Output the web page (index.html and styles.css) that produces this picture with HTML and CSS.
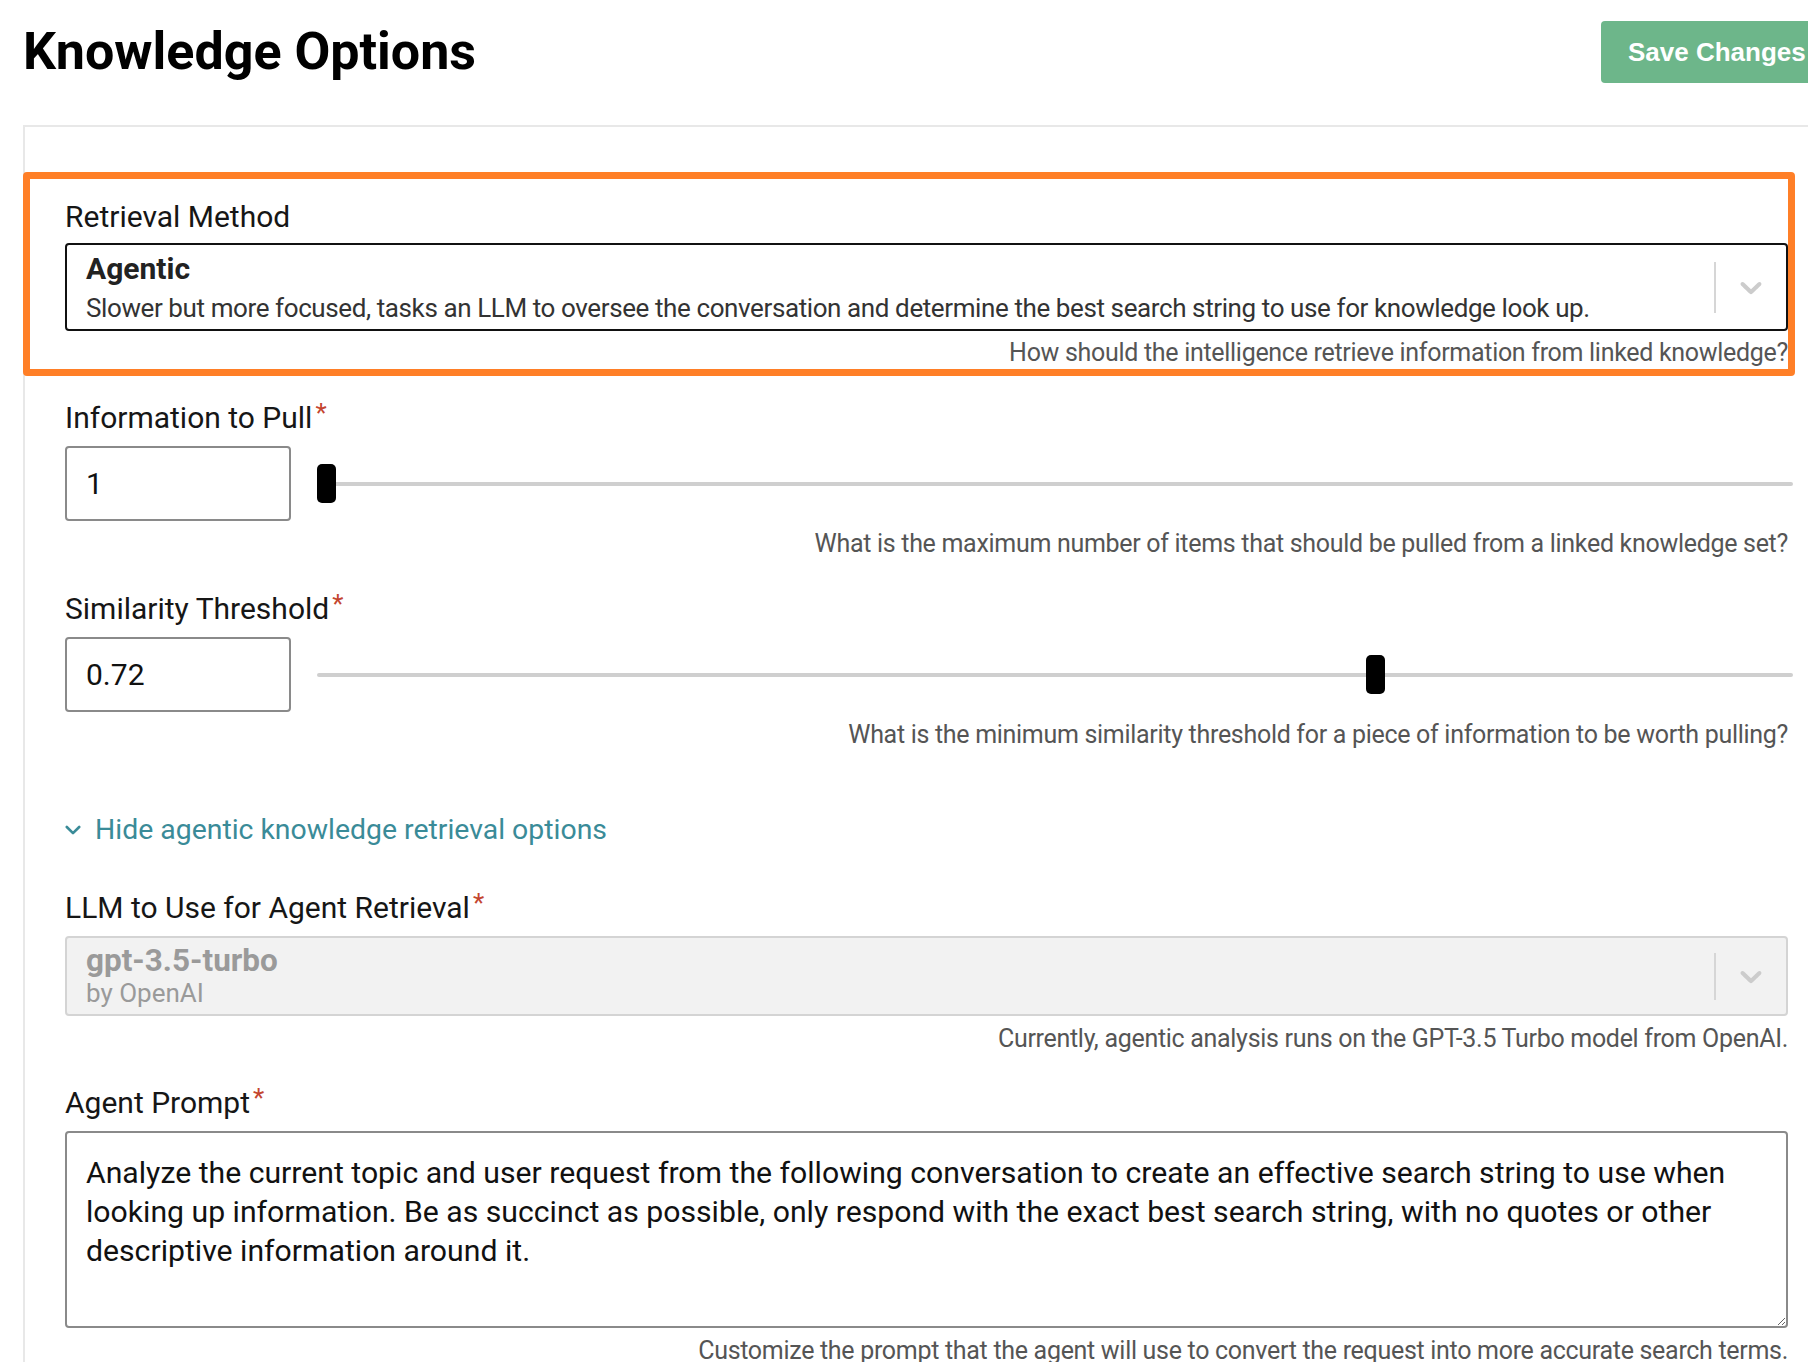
FILE: index.html
```html
<!DOCTYPE html>
<html lang="en">
<head>
<meta charset="utf-8">
<title>Knowledge Options</title>
<link rel="stylesheet" href="styles.css">
</head>
<body>
<div class="page">
  <header class="header">
    <h1 class="title">Knowledge Options</h1>
    <button class="save-btn" type="button">Save Changes</button>
  </header>

  <section class="card">
    <div class="fields">

      <div class="field highlight">
        <label class="label label-first">Retrieval Method</label>
        <div class="select">
          <div class="select-value">
            <div class="select-title">Agentic</div>
            <div class="select-desc">Slower but more focused, tasks an LLM to oversee the conversation and determine the best search string to use for knowledge look up.</div>
          </div>
          <div class="indicators">
            <span class="separator"></span>
            <svg class="chev" viewBox="0 0 20 20" aria-hidden="true"><path d="M4.516 7.548c0.436-0.446 1.043-0.481 1.576 0l3.908 3.747 3.908-3.747c0.533-0.481 1.141-0.446 1.574 0 0.436 0.445 0.408 1.197 0 1.615-0.406 0.418-4.695 4.502-4.695 4.502-0.217 0.223-0.502 0.335-0.787 0.335s-0.57-0.112-0.789-0.335c0 0-4.287-4.084-4.695-4.502s-0.436-1.17 0-1.615z"/></svg>
          </div>
        </div>
        <p class="help help-tight">How should the intelligence retrieve information from linked knowledge?</p>
      </div>

      <div class="field field-info">
        <label class="label">Information to Pull<span class="req">*</span></label>
        <div class="slider-row">
          <input class="num" type="text" value="1">
          <input class="range" type="range" min="1" max="20" step="1" value="1">
        </div>
        <p class="help">What is the maximum number of items that should be pulled from a linked knowledge set?</p>
      </div>

      <div class="field field-sim">
        <label class="label">Similarity Threshold<span class="req">*</span></label>
        <div class="slider-row">
          <input class="num" type="text" value="0.72">
          <input class="range" type="range" min="0" max="1" step="0.01" value="0.72">
        </div>
        <p class="help">What is the minimum similarity threshold for a piece of information to be worth pulling?</p>
      </div>

      <div class="toggle">
        <svg class="toggle-chev" viewBox="0 0 16 16" aria-hidden="true"><path d="M1.8 5 8 11.2 14.2 5"/></svg>
        <span>Hide agentic knowledge retrieval options</span>
      </div>

      <div class="field field-llm">
        <label class="label">LLM to Use for Agent Retrieval<span class="req">*</span></label>
        <div class="select select-disabled">
          <div class="select-value">
            <div class="llm-title">gpt-3.5-turbo</div>
            <div class="llm-sub">by OpenAI</div>
          </div>
          <div class="indicators">
            <span class="separator separator-short"></span>
            <svg class="chev" viewBox="0 0 20 20" aria-hidden="true"><path d="M4.516 7.548c0.436-0.446 1.043-0.481 1.576 0l3.908 3.747 3.908-3.747c0.533-0.481 1.141-0.446 1.574 0 0.436 0.445 0.408 1.197 0 1.615-0.406 0.418-4.695 4.502-4.695 4.502-0.217 0.223-0.502 0.335-0.787 0.335s-0.57-0.112-0.789-0.335c0 0-4.287-4.084-4.695-4.502s-0.436-1.17 0-1.615z"/></svg>
          </div>
        </div>
        <p class="help">Currently, agentic analysis runs on the GPT-3.5 Turbo model from OpenAI.</p>
      </div>

      <div class="field field-prompt">
        <label class="label">Agent Prompt<span class="req">*</span></label>
        <textarea class="prompt">Analyze the current topic and user request from the following conversation to create an effective search string to use when looking up information. Be as succinct as possible, only respond with the exact best search string, with no quotes or other descriptive information around it.</textarea>
        <p class="help">Customize the prompt that the agent will use to convert the request into more accurate search terms.</p>
      </div>

    </div>
  </section>
</div>
<div class="bottom-fade"></div>
</body>
</html>
```

FILE: styles.css
```css
* { box-sizing: border-box; }

html, body {
  margin: 0;
  padding: 0;
  background: #fff;
  overflow: hidden;
}

body {
  font-family: Roboto, "Noto Sans", sans-serif;
  color: #161616;
}

.page {
  width: 1830px;
  padding-left: 23px;
}

.header {
  display: flex;
  justify-content: space-between;
  align-items: center;
  padding-top: 21px;
  height: 83px;
}

.title {
  margin: 0;
  font-size: 52px;
  font-weight: 700;
  line-height: 62px;
  color: #000;
}

.save-btn {
  height: 62px;
  width: 229px;
  border: 0;
  border-radius: 4px;
  background: #6db68a;
  color: #fff;
  font-family: "Liberation Sans", Arial, sans-serif;
  font-weight: 700;
  font-size: 26px;
  padding: 0 0 0 27px;
  text-align: left;
}

.card {
  margin-top: 42px;
  border-top: 2px solid #e8e8e8;
  border-left: 2px solid #e8e8e8;
  padding: 45px 0 60px 40px;
}

.fields {
  width: 1723px;
}

.highlight {
  margin: 0 -7px 0 -42px;
  border: 7px solid #ff7f27;
  border-radius: 4px;
  padding: 20px 0 0 35px;
}

.label {
  display: block;
  font-size: 30px;
  line-height: 36px;
  color: #161616;
  margin-bottom: 10px;
}

.label-first {
  margin-bottom: 8px;
}

.req {
  color: #c4452f;
  font-size: 26px;
  vertical-align: top;
  line-height: 26px;
  margin-left: 3px;
}

.select {
  display: flex;
  align-items: center;
  border: 2px solid #111;
  border-radius: 4px;
  height: 88px;
  padding-left: 19px;
  background: #fff;
}

.select-value {
  flex: 1;
  min-width: 0;
}

.select-title {
  font-size: 30px;
  font-weight: 700;
  line-height: 36px;
  color: #222;
}

.select-desc {
  margin-top: 5px;
  font-size: 26px;
  line-height: 32px;
  letter-spacing: -0.4px;
  color: #333;
}

.indicators {
  display: flex;
  align-items: center;
  padding-right: 17px;
}

.separator {
  width: 2px;
  height: 51px;
  background: #d6d6d6;
  margin-right: 17px;
}

.separator-short {
  height: 47px;
}

.chev {
  width: 36px;
  height: 36px;
  fill: #cccccc;
}

.help {
  margin: 7px 0 0;
  text-align: right;
  font-size: 25px;
  line-height: 32px;
  letter-spacing: -0.3px;
  color: #555;
}

.help-tight {
  margin-top: 6px;
}

.field-info { margin-top: 24px; }
.field-sim { margin-top: 31px; }
.field-llm { margin-top: 42px; }
.field-prompt { margin-top: 30px; }

.slider-row {
  display: flex;
  align-items: center;
  gap: 26px;
}

.num {
  width: 226px;
  height: 75px;
  border: 2px solid #8a8a8a;
  border-radius: 4px;
  padding: 0 0 0 19px;
  font-family: Roboto, "Noto Sans", sans-serif;
  font-size: 30px;
  color: #111;
  background: #fff;
  flex: none;
}

.range {
  -webkit-appearance: none;
  appearance: none;
  flex: 1;
  height: 40px;
  margin: 0 -5px 0 0;
  background: transparent;
}

.range::-webkit-slider-runnable-track {
  height: 4px;
  background: #cfcfcf;
  border-radius: 2px;
}

.range::-webkit-slider-thumb {
  -webkit-appearance: none;
  appearance: none;
  width: 19px;
  height: 39px;
  border-radius: 5px;
  background: #000;
  border: 0;
  margin-top: -17.5px;
}

.toggle {
  display: flex;
  align-items: center;
  gap: 14px;
  margin-top: 61px;
  font-size: 28.4px;
  line-height: 36px;
  color: #3a8b98;
}

.toggle-chev {
  width: 16px;
  height: 16px;
  fill: none;
  stroke: #3a8b98;
  stroke-width: 2.6;
  stroke-linecap: round;
  stroke-linejoin: round;
}

.select-disabled {
  height: 80px;
  border-color: #d4d4d4;
  background: #f2f2f2;
}

.llm-title {
  font-size: 31.5px;
  font-weight: 700;
  line-height: 34px;
  color: #9a9a9a;
}

.llm-sub {
  font-size: 26px;
  line-height: 30px;
  color: #9a9a9a;
}

.prompt {
  display: block;
  width: 100%;
  height: 197px;
  border: 2px solid #8a8a8a;
  border-radius: 4px;
  padding: 20px 19px;
  font-family: Roboto, "Noto Sans", sans-serif;
  font-size: 30.2px;
  line-height: 39px;
  color: #111;
  background: #fff;
}

.bottom-fade {
  position: fixed;
  left: 0;
  right: 0;
  bottom: 0;
  height: 26px;
  background: linear-gradient(rgba(243, 243, 243, 0), #f3f3f3);
  z-index: -1;
}
```
